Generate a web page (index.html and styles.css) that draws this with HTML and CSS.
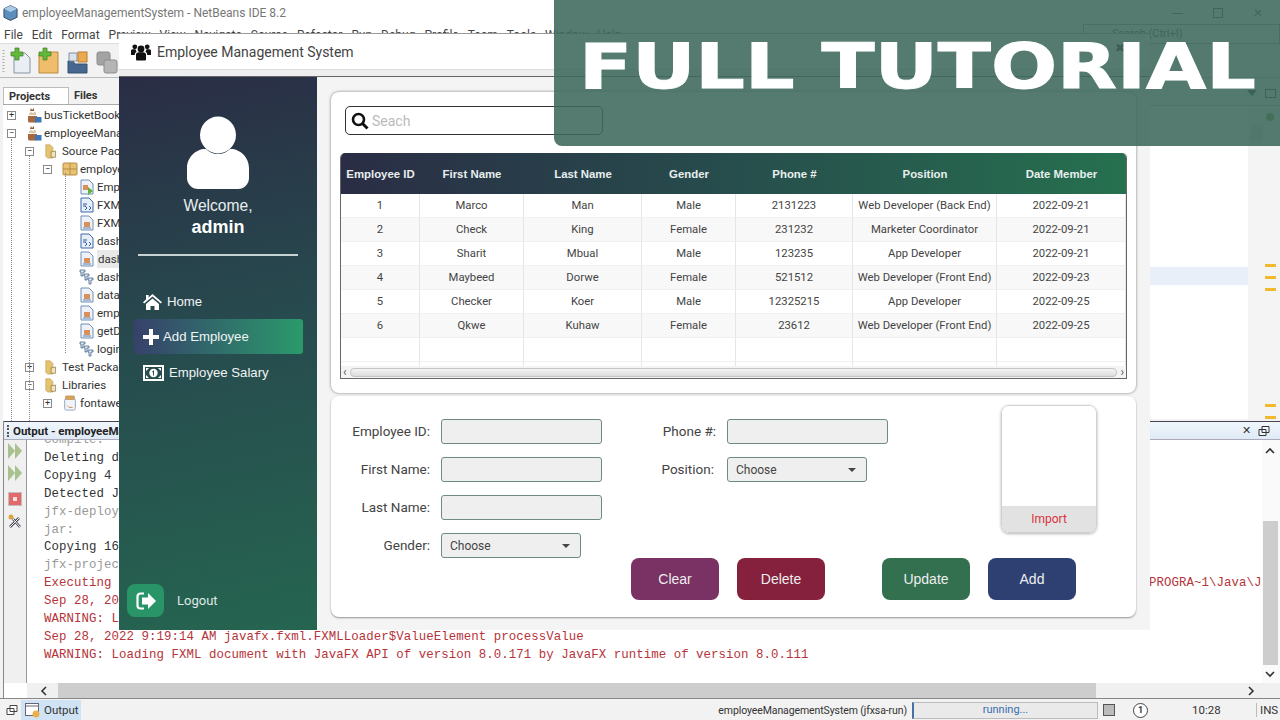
FILE: index.html
```html
<!DOCTYPE html>
<html lang="en">
<head>
    <meta charset="UTF-8">
    <title>Employee Management System</title>
    <link rel="stylesheet" href="styles.css">
</head>
<body>
    <svg class="defs" width="0" height="0">
        <symbol id="i-project" viewBox="0 0 16 16">
            <path d="M2 9h9v5a1.500 1.500 0 0 1-1.500 1.500h-6A1.500 1.500 0 0 1 2 14z" fill="#a8673c"/>
            <path d="M3 6.500l2-1.500 2 1 2-1.500 1 1.500v2H3z" fill="#d9c7a8"/>
            <path d="M5 1l1 2 2-2 0 3H4z" fill="#8a5a3a"/>
            <rect x="9" y="10" width="6.500" height="5.500" fill="#3d77b8"/>
        </symbol>
        <symbol id="i-folder" viewBox="0 0 16 18">
            <path d="M1 2h5l3 3v12H3l-2-2z" fill="#e5c26c" stroke="#b7934a" stroke-width=".6"/>
            <path d="M7 10l5-1v7H7z" fill="#f3e3b6" stroke="#7a6a44" stroke-width=".7"/>
        </symbol>
        <symbol id="i-package" viewBox="0 0 16 16">
            <rect x="1" y="2" width="14" height="12" rx="1" fill="#e8c272" stroke="#b58d43"/>
            <path d="M8 2v12M1 8h14" stroke="#b58d43"/>
        </symbol>
        <symbol id="i-form" viewBox="0 0 14 16">
            <path d="M1 1h8l4 4v10H1z" fill="#eef2f8" stroke="#6f8fb8"/>
            <rect x="4" y="7" width="6" height="5" fill="#d8905c"/>
            <path d="M3 13h8" stroke="#5d80b0"/>
        </symbol>
        <symbol id="i-fxml" viewBox="0 0 14 16">
            <path d="M1 1h8l4 4v10H1z" fill="#e8eef8" stroke="#3c69a8"/>
            <path d="M3 7h4M3 9h3M5 13l2-2-2-2M9 13l2-2-2-2" stroke="#2f5f9f" fill="none"/>
        </symbol>
        <symbol id="i-run" viewBox="0 0 14 16">
            <path d="M1 1h8l4 4v10H1z" fill="#eef2f8" stroke="#6f8fb8"/>
            <rect x="3" y="6" width="5" height="5" fill="#d8905c"/>
            <path d="M8 8l5 4-5 4z" fill="#5fb23a"/>
        </symbol>
        <symbol id="i-css" viewBox="0 0 16 16">
            <path d="M1 1h5v2H4v4H2V3H1zM5 5h5v2H8v4H6V7H5zM9 9h5v2h-2v4h-2v-4H9z" fill="#dfe8f2" stroke="#46688e" stroke-width=".8"/>
        </symbol>
        <symbol id="i-jar" viewBox="0 0 14 18">
            <rect x="1" y="4" width="12" height="13" rx="2" fill="#f1f4f8" stroke="#8aa0b8"/>
            <rect x="2" y="1" width="10" height="4" rx="1" fill="#d9a45a" stroke="#a87b3c" stroke-width=".6"/>
            <path d="M4 12l2 2h4" stroke="#c98a3c" fill="none"/>
        </symbol>
    </svg>

    <!-- NetBeans behind the app -->
    <div class="ide">
        <div class="ide-title">
            <svg class="ide-logo" width="15" height="18" viewBox="0 0 16 18">
                <path d="M8 1l7 3.500v9L8 17l-7-3.500v-9z" fill="#5c8dbd" stroke="#33485e"/>
                <path d="M8 1l7 3.500L8 8 1 4.500z" fill="#a9cbe6"/>
            </svg>
            <span>employeeManagementSystem - NetBeans IDE 8.2</span>
            <div class="win-btns">
                <span class="win-min"></span>
                <span class="win-max"></span>
                <span class="win-close">&#x2715;</span>
            </div>
        </div>
        <div class="ide-menu">
            <span>File</span><span>Edit</span><span>Format</span><span>Preview</span><span>View</span><span>Navigate</span><span>Source</span><span>Refactor</span><span>Run</span><span>Debug</span><span>Profile</span><span>Team</span><span>Tools</span><span>Window</span><span>Help</span>
            <div class="ide-search">Search (Ctrl+I)</div>
        </div>
        <div class="ide-tools">
            <svg width="120" height="34" viewBox="0 0 120 34">
                <path d="M3.500 6v22" stroke="#aaa" stroke-dasharray="1 2" stroke-width="2"/>
                <path d="M14 9h11l5 5v15H14z" fill="#e9eef4" stroke="#8794a2"/>
                <path d="M15 4h4v4h4v4h-4v4h-4v-4h-4V8h4z" fill="#62b83a" stroke="#3c7f1f" stroke-width=".7"/>
                <path d="M39 10h6l2-2h11v21H39z" fill="#f0bd6c" stroke="#b98a3e"/>
                <path d="M43 4h4v4h4v4h-4v4h-4v-4h-4V8h4z" fill="#62b83a" stroke="#3c7f1f" stroke-width=".7"/>
                <path d="M68 17h5l2 3h12v9H68z" fill="#46678f" stroke="#34506f"/>
                <path d="M69 9h8v8h-8z" fill="#dbe4ec" stroke="#7d8fa2"/>
                <rect x="78" y="8" width="9" height="10" fill="#eda94f" stroke="#b77f33"/>
                <rect x="97" y="8" width="13" height="13" rx="2" fill="#a3a3a3" stroke="#8c8c8c"/>
                <rect x="104" y="16" width="13" height="13" rx="2" fill="#b5b5b5" stroke="#8c8c8c"/>
            </svg>
        </div>
        <div class="ide-body">
            <div class="ide-left">
                <div class="panel-tabs">
                    <div class="panel-tab active">Projects <span class="tab-x">&#x2715;</span></div>
                    <div class="panel-tab">Files</div>
                </div>
                <div class="tree">
                    <i class="tree-line l0"></i><i class="tree-line l1"></i><i class="tree-line l2"></i>
                    <div class="tree-row d0"><b class="exp">+</b><svg><use href="#i-project"/></svg>busTicketBooking</div>
                    <div class="tree-row d0"><b class="exp">&minus;</b><svg><use href="#i-project"/></svg>employeeManagementSystem</div>
                    <div class="tree-row d1"><b class="exp">&minus;</b><svg><use href="#i-folder"/></svg>Source Packages</div>
                    <div class="tree-row d2"><b class="exp">&minus;</b><svg><use href="#i-package"/></svg>employeemanagementsystem</div>
                    <div class="tree-row d3"><svg><use href="#i-run"/></svg>EmployeeManagementSystem.java</div>
                    <div class="tree-row d3"><svg><use href="#i-fxml"/></svg>FXMLDocument.fxml</div>
                    <div class="tree-row d3"><svg><use href="#i-form"/></svg>FXMLDocumentController.java</div>
                    <div class="tree-row d3"><svg><use href="#i-fxml"/></svg>dashboard.fxml</div>
                    <div class="tree-row d3"><svg><use href="#i-form"/></svg><span class="tree-sel">dashboardController.java</span></div>
                    <div class="tree-row d3"><svg><use href="#i-css"/></svg>dashboardDesign.css</div>
                    <div class="tree-row d3"><svg><use href="#i-form"/></svg>database.java</div>
                    <div class="tree-row d3"><svg><use href="#i-form"/></svg>employeeData.java</div>
                    <div class="tree-row d3"><svg><use href="#i-form"/></svg>getData.java</div>
                    <div class="tree-row d3"><svg><use href="#i-css"/></svg>loginDesign.css</div>
                    <div class="tree-row d1"><b class="exp">+</b><svg><use href="#i-folder"/></svg>Test Packages</div>
                    <div class="tree-row d1"><b class="exp">&minus;</b><svg><use href="#i-folder"/></svg>Libraries</div>
                    <div class="tree-row d2"><b class="exp">+</b><svg><use href="#i-jar"/></svg>fontawesome.jar</div>
                </div>
            </div>
            <div class="ide-editor">
                <div class="editor-head"><i class="tri"></i><i class="box"></i></div>
                <div class="editor-main">
                    <div class="editor-page"><div class="editor-hl"></div></div>
                    <div class="editor-marks">
                        <i class="mark-dot"></i><i class="mark-thumb"></i>
                        <i class="mark m1"></i><i class="mark m2"></i><i class="mark m3"></i><i class="mark m4"></i><i class="mark m5"></i>
                    </div>
                </div>
            </div>
        </div>
        <div class="output">
            <div class="output-head">
                <span class="grip"></span><span class="output-title">Output - employeeManagementSystem (jfxsa-run)</span>
                <span class="output-x">&#x2715;</span>
                <svg width="12" height="12" viewBox="0 0 12 12"><path d="M4 1.500h7v6H4zM1 4.500h7v6H1z" fill="#eef5fc" stroke="#333"/></svg>
            </div>
            <div class="output-body">
                <div class="gutter">
                    <svg width="18" height="18" viewBox="0 0 18 18"><path d="M2 1l7 8-7 8zM9 1l7 8-7 8z" fill="#a9c08f"/></svg>
                    <svg width="18" height="18" viewBox="0 0 18 18"><path d="M2 1l7 8-7 8zM9 1l7 8-7 8z" fill="#a9c08f"/></svg>
                    <svg class="g-stop" width="14" height="14" viewBox="0 0 14 14"><rect x=".5" y=".5" width="13" height="13" fill="#e46a6a" stroke="#c0c0c0"/><rect x="5" y="5" width="4" height="4" fill="#fbe0e0"/></svg>
                    <svg class="g-tool" width="16" height="16" viewBox="0 0 16 16"><circle cx="4" cy="3" r="2.500" fill="#d9a53c"/><path d="M3 13l9-9M6 5l7 8" stroke="#445" stroke-width="2.500"/><path d="M3 13l9-9M6 5l7 8" stroke="#fff" stroke-width="1"/></svg>
                </div>
                <div class="output-text">
                    <div class="line-cut">
                        <div class="ln dim">Compile:</div>
                        <div class="ln">Deleting directory</div>
                        <div class="ln">Copying 4 files</div>
                        <div class="ln">Detected JavaFX</div>
                        <div class="ln dim">jfx-deployment:</div>
                        <div class="ln dim">jar:</div>
                        <div class="ln">Copying 16 files</div>
                        <div class="ln dim">jfx-project-run:</div>
                        <div class="ln red">Executing<span class="tail">PROGRA~1\Java\JDK</span></div>
                        <div class="ln red">Sep 28, 2022</div>
                        <div class="ln red">WARNING: Loading</div>
                        <div class="ln red">Sep 28, 2022 9:19:14 AM javafx.fxml.FXMLLoader$ValueElement processValue</div>
                        <div class="ln red">WARNING: Loading FXML document with JavaFX API of version 8.0.171 by JavaFX runtime of version 8.0.111</div>
                    </div>
                    <div class="out-vbar">
                        <svg class="chev-up" width="10" height="7" viewBox="0 0 10 7"><path d="M1 6l4-4 4 4" fill="none" stroke="#333" stroke-width="1.600"/></svg>
                        <i class="out-vthumb"></i>
                        <svg class="chev-down" width="10" height="7" viewBox="0 0 10 7"><path d="M1 1l4 4 4-4" fill="none" stroke="#333" stroke-width="1.600"/></svg>
                    </div>
                </div>
            </div>
            <div class="out-hbar">
                <svg class="chev-left" width="7" height="10" viewBox="0 0 7 10"><path d="M6 1L2 5l4 4" fill="none" stroke="#333" stroke-width="1.600"/></svg>
                <i class="out-hthumb"></i>
                <svg class="chev-right" width="7" height="10" viewBox="0 0 7 10"><path d="M1 1l4 4-4 4" fill="none" stroke="#333" stroke-width="1.600"/></svg>
            </div>
        </div>
        <div class="status">
            <svg width="12" height="12" viewBox="0 0 12 12"><path d="M4 1.500h7v6H4zM1 4.500h7v6H1z" fill="#fff" stroke="#444"/></svg>
            <div class="status-tab">
                <svg width="16" height="15" viewBox="0 0 16 15"><rect x=".5" y=".5" width="13" height="12" fill="#fff" stroke="#667"/><path d="M1 3h12" stroke="#667"/><circle cx="11" cy="11" r="3.500" fill="#e8b04c"/></svg>
                Output
            </div>
            <span class="status-proj">employeeManagementSystem (jfxsa-run)</span>
            <div class="status-run">running...</div>
            <span class="status-ico"></span>
            <span class="status-note">1</span>
            <span class="status-time">10:28</span>
            <span class="status-ins">INS</span>
        </div>
    </div>

    <!-- the app window -->
    <div class="app">
        <div class="app-title">
            <svg width="20" height="18" viewBox="0 0 20 18">
                <circle cx="10" cy="6" r="3.400" fill="#111"/><circle cx="3.800" cy="3.800" r="2.400" fill="#111"/><circle cx="16.200" cy="3.800" r="2.400" fill="#111"/>
                <path d="M5 11a3 3 0 0 1 3-1.800h4a3 3 0 0 1 3 1.800v5.500a1 1 0 0 1-1 1H6a1 1 0 0 1-1-1z" fill="#111"/>
                <path d="M0 7.500a2 2 0 0 1 2-1.300h2.600a4 4 0 0 0 1 2.400A4 4 0 0 0 3.700 12H0zM20 7.500a2 2 0 0 0-2-1.300h-2.600a4 4 0 0 1-1 2.400 4 4 0 0 1 1.900 3.400H20z" fill="#111"/>
            </svg>
            <span>Employee Management System</span>
        </div>
        <div class="app-strip"></div>
        <div class="app-body">
            <div class="sidebar">
                <svg class="avatar" width="64" height="74" viewBox="0 0 64 74">
                    <ellipse cx="32" cy="19" rx="18" ry="18.500" fill="#fff"/>
                    <path d="M1 62V52C1 40 12 32 20 33c3 3 7 5 12 5s9-2 12-5c8-1 19 7 19 19v10a11 11 0 0 1-11 11H12A11 11 0 0 1 1 62z" fill="#fff"/>
                </svg>
                <div class="welcome">Welcome,</div>
                <div class="username">admin</div>
                <div class="side-line"></div>
                <div class="nav">
                    <div class="nav-item nav-home">
                        <svg width="19" height="16" viewBox="0 0 19 16"><path d="M9.500 0L19 8.200l-1.200 1.300-8.300-7-8.300 7L0 8.200l3-2.600V1h2.600v2.400z" fill="#fff"/><path d="M3 10l6.500-5.500L16 10v6h-4.500v-4h-4v4H3z" fill="#fff"/></svg>
                        Home
                    </div>
                    <div class="nav-item nav-add active">
                        <svg width="16" height="16" viewBox="0 0 16 16"><path d="M6 0h4v6h6v4h-6v6H6v-6H0V6h6z" fill="#fff"/></svg>
                        Add Employee
                    </div>
                    <div class="nav-item nav-salary">
                        <svg width="21" height="16" viewBox="0 0 21 16"><path d="M0 0h21v16H0zM2 2v12h17V2z" fill="#fff"/><circle cx="10.500" cy="8" r="4.200" fill="#fff"/><path d="M3 3h3L3 6zM18 3v3l-3-3zM3 13v-3l3 3zM18 13h-3l3-3z" fill="#fff"/><path d="M10 5.500h1v5h-1zM9.200 6.300h1v1h-1z" fill="#2a5550"/></svg>
                        Employee Salary
                    </div>
                </div>
                <div class="logout">
                    <button class="logout-btn">
                        <svg width="20" height="18" viewBox="0 0 20 18"><path d="M8 1.500H4.500A3 3 0 0 0 1.500 4.500v9a3 3 0 0 0 3 3H8" fill="none" stroke="#fff" stroke-width="2.200"/><path d="M12 1l8 8-8 8v-4.500H6v-7h6z" fill="#fff"/></svg>
                    </button>
                    <span>Logout</span>
                </div>
            </div>
            <div class="content">
                <div class="card card-top">
                    <div class="search">
                        <svg width="18" height="18" viewBox="0 0 18 18"><circle cx="7.500" cy="7.500" r="5.500" fill="none" stroke="#111" stroke-width="2.600"/><path d="M11.500 11.500l5 5" stroke="#111" stroke-width="3"/></svg>
                        <span>Seach</span>
                    </div>
                    <div class="table-frame">
                        <div class="table-clip">
                            <table class="emp-table">
                                <colgroup>
                                    <col class="c1"><col class="c2"><col class="c3"><col class="c4"><col class="c5"><col class="c6"><col class="c7">
                                </colgroup>
                                <thead>
                                    <tr>
                                        <th>Employee ID</th><th>First Name</th><th>Last Name</th><th>Gender</th><th>Phone #</th><th>Position</th><th>Date Member</th>
                                    </tr>
                                </thead>
                                <tbody>
                                    <tr><td>1</td><td>Marco</td><td>Man</td><td>Male</td><td>2131223</td><td>Web Developer (Back End)</td><td>2022-09-21</td></tr>
                                    <tr><td>2</td><td>Check</td><td>King</td><td>Female</td><td>231232</td><td>Marketer Coordinator</td><td>2022-09-21</td></tr>
                                    <tr><td>3</td><td>Sharit</td><td>Mbual</td><td>Male</td><td>123235</td><td>App Developer</td><td>2022-09-21</td></tr>
                                    <tr><td>4</td><td>Maybeed</td><td>Dorwe</td><td>Female</td><td>521512</td><td>Web Developer (Front End)</td><td>2022-09-23</td></tr>
                                    <tr><td>5</td><td>Checker</td><td>Koer</td><td>Male</td><td>12325215</td><td>App Developer</td><td>2022-09-25</td></tr>
                                    <tr><td>6</td><td>Qkwe</td><td>Kuhaw</td><td>Female</td><td>23612</td><td>Web Developer (Front End)</td><td>2022-09-25</td></tr>
                                    <tr class="empty"><td></td><td></td><td></td><td></td><td></td><td></td><td></td></tr>
                                    <tr class="empty"><td></td><td></td><td></td><td></td><td></td><td></td><td></td></tr>
                                </tbody>
                            </table>
                        </div>
                        <div class="table-scroll">
                            <span>&#x2039;</span><i class="table-thumb"></i><span>&#x203A;</span>
                        </div>
                    </div>
                </div>
                <div class="card card-form">
                    <div class="form-left">
                        <div class="field"><label>Employee ID:</label><div class="input"></div></div>
                        <div class="field"><label>First Name:</label><div class="input"></div></div>
                        <div class="field"><label>Last Name:</label><div class="input"></div></div>
                        <div class="field"><label>Gender:</label><div class="input select">Choose<i class="caret"></i></div></div>
                    </div>
                    <div class="form-right">
                        <div class="form-top">
                            <div class="form-mid">
                                <div class="field"><label>Phone #:</label><div class="input"></div></div>
                                <div class="field field-pos"><label>Position:</label><div class="input select">Choose<i class="caret"></i></div></div>
                            </div>
                            <div class="photo">
                                <div class="photo-img"></div>
                                <div class="photo-btn">Import</div>
                            </div>
                        </div>
                        <div class="actions">
                            <button class="btn btn-clear">Clear</button>
                            <button class="btn btn-delete">Delete</button>
                            <button class="btn btn-update">Update</button>
                            <button class="btn btn-add">Add</button>
                        </div>
                    </div>
                </div>
            </div>
        </div>
        <span class="app-x">&#x2716;</span>
    </div>

    <!-- video banner -->
    <div class="banner">
        <div class="banner-text">FULL TUTORIAL</div>
    </div>
</body>
</html>
```

FILE: styles.css
```css
* {
    margin: 0;
    padding: 0;
    box-sizing: border-box;
}

body {
    width: 1280px;
    height: 720px;
    position: relative;
    overflow: hidden;
    background: #fff;
    font-family: Roboto, sans-serif;
    color: #333;
}

.defs {
    position: absolute;
}

/* NetBeans */
.ide {
    width: 1280px;
    height: 720px;
    display: flex;
    flex-direction: column;
    background: #f2f2f2;
}

.ide-title {
    height: 26px;
    flex: none;
    display: flex;
    align-items: center;
    gap: 4px;
    padding-left: 3px;
    background: #fff;
    font-size: 12px;
    color: #777;
}

.win-btns {
    margin-left: auto;
    display: flex;
    align-items: center;
    gap: 30px;
    padding-right: 17px;
    color: #555;
}

.win-min {
    width: 11px;
    height: 1px;
    background: #555;
}

.win-max {
    width: 10px;
    height: 10px;
    border: 1px solid #555;
}

.win-close {
    font-size: 12px;
}

.ide-menu {
    height: 18px;
    flex: none;
    display: flex;
    align-items: center;
    gap: 9px;
    padding-left: 4px;
    background: #fff;
    font-size: 12px;
    color: #444;
    border-bottom: 1px solid #ddd;
    position: relative;
}

.ide-search {
    position: absolute;
    left: 1083px;
    top: -2px;
    width: 197px;
    height: 20px;
    padding-left: 28px;
    border: 1px solid #999;
    font-size: 11px;
    line-height: 18px;
}

.ide-tools {
    height: 34px;
    flex: none;
    background: #f2f2f2;
    border-bottom: 1px solid #bbb;
}

.ide-body {
    flex: 1;
    min-height: 0;
    display: flex;
}

.ide-left {
    width: 400px;
    flex: none;
    padding: 9px 0 0 3px;
    background: #f2f2f2;
}

.panel-tabs {
    height: 18px;
    display: flex;
    border-bottom: 1px solid #aaa;
}

.panel-tab {
    padding: 0 6px 0 5px;
    font-size: 11px;
    font-weight: 700;
    line-height: 18px;
    color: #333;
}

.panel-tab.active {
    background: #fff;
    width: 66px;
    border: 1px solid #bbb;
    border-bottom: none;
}

.tab-x {
    margin-left: 6px;
    font-weight: 400;
    font-size: 10px;
}

.tree {
    position: relative;
    height: 330px;
    padding-top: 1px;
    background: #fff;
    overflow: hidden;
}

.tree-row {
    height: 18px;
    display: flex;
    align-items: center;
    font-size: 11.5px;
    color: #333;
    white-space: nowrap;
}

.tree-row svg {
    width: 16px;
    height: 16px;
    flex: none;
    margin-right: 2px;
}

.tree-row.d0 { padding-left: 4px; }
.tree-row.d1 { padding-left: 22px; }
.tree-row.d2 { padding-left: 40px; }
.tree-row.d3 { padding-left: 76px; }

.exp {
    width: 9px;
    height: 9px;
    margin-right: 10px;
    flex: none;
    border: 1px solid #8a8a8a;
    background: #fff;
    font-size: 9px;
    font-weight: 400;
    line-height: 7px;
    text-align: center;
    color: #333;
}

.tree-sel {
    padding: 2px 4px 2px 1px;
    background: #e8e8e8;
}

.tree-line {
    position: absolute;
    width: 0;
    border-left: 1px dotted #888;
}

.tree-line.l0 { left: 8px; top: 34px; height: 300px; }
.tree-line.l1 { left: 26px; top: 50px; height: 300px; }
.tree-line.l2 { left: 62px; top: 68px; height: 180px; }

.ide-editor {
    flex: 1;
    display: flex;
    flex-direction: column;
}

.editor-head {
    height: 28px;
    display: flex;
    justify-content: flex-end;
    align-items: center;
    gap: 8px;
    padding: 3px 4px 0 0;
    background: #f2f2f2;
    border-bottom: 1px solid #bbb;
}

.tri {
    width: 0;
    height: 0;
    border: 5px solid transparent;
    border-top: 6px solid #333;
    border-bottom: none;
}

.box {
    width: 11px;
    height: 9px;
    border: 1px solid #333;
}

.editor-main {
    height: 313px;
    display: flex;
    background: #fff;
}

.editor-page {
    flex: 1;
    position: relative;
}

.editor-hl {
    position: absolute;
    left: 0;
    right: 0;
    top: 161px;
    height: 18px;
    background: #e9eff8;
}

.editor-marks {
    width: 32px;
    position: relative;
    background: #f4f4f4;
}

.mark-dot {
    position: absolute;
    left: 18px;
    top: 7px;
    width: 8px;
    height: 8px;
    border-radius: 50%;
    background: #6fa53c;
}

.mark-thumb {
    position: absolute;
    left: 2px;
    top: 19px;
    width: 13px;
    height: 18px;
    background: #d8d8d8;
}

.mark {
    position: absolute;
    left: 17px;
    width: 11px;
    height: 3px;
    background: #f2b92c;
}

.mark.m1 { top: 158px; }
.mark.m2 { top: 170px; }
.mark.m3 { top: 182px; }
.mark.m4 { top: 298px; }
.mark.m5 { top: 310px; }

/* output panel */
.output {
    position: absolute;
    left: 3px;
    top: 421px;
    width: 1277px;
    height: 277px;
    display: flex;
    flex-direction: column;
    background: #fff;
    border-left: 1px solid #888;
}

.output-head {
    height: 19px;
    flex: none;
    display: flex;
    align-items: center;
    padding: 0 10px 0 3px;
    background: linear-gradient(#f0f6fc, #dfeaf6);
    border-top: 1px solid #445;
    border-bottom: 1px solid #aab;
}

.grip {
    width: 2px;
    height: 12px;
    margin-right: 4px;
    border-left: 2px dotted #555;
}

.output-title {
    font-size: 11.5px;
    font-weight: 700;
    color: #222;
}

.output-x {
    margin-left: auto;
    margin-right: 7px;
    font-size: 11px;
    color: #333;
}

.output-body {
    flex: 1;
    min-height: 0;
    display: flex;
}

.gutter {
    width: 23px;
    flex: none;
    display: flex;
    flex-direction: column;
    align-items: center;
    gap: 4px;
    padding-top: 2px;
    background: #f0f0f0;
    border-right: 1px solid #999;
}

.g-stop { margin-top: 6px; }
.g-tool { margin-top: 4px; }

.output-text {
    flex: 1;
    min-width: 0;
    display: flex;
    background: #fff;
    overflow: hidden;
}

.line-cut {
    flex: 1;
    min-width: 0;
    height: 100%;
    margin-top: -8px;
    padding-left: 17px;
    font-family: "Liberation Mono", monospace;
    font-size: 12.4px;
    letter-spacing: 0.06px;
    line-height: 17.9px;
    white-space: nowrap;
    overflow: hidden;
}

.ln {
    color: #333;
    position: relative;
}

.ln.dim {
    color: #999;
}

.ln.red {
    color: #b5343a;
}

.tail {
    position: absolute;
    left: 1105px;
}

.out-vbar {
    width: 18px;
    flex: none;
    position: relative;
    background: #fafafa;
}

.out-vthumb {
    position: absolute;
    left: 1px;
    top: 81px;
    width: 15px;
    height: 144px;
    background: #cdcdcd;
}

.chev-up {
    position: absolute;
    left: 3px;
    top: 7px;
}

.chev-down {
    position: absolute;
    left: 3px;
    bottom: 5px;
}

.out-hbar {
    height: 15px;
    flex: none;
    display: flex;
    align-items: center;
    margin-left: 23px;
    background: #f0f0f0;
}

.chev-left {
    margin: 0 11px 0 13px;
}

.out-hthumb {
    width: 1038px;
    height: 15px;
    background: #cdcdcd;
}

.chev-right {
    margin-left: auto;
    margin-right: 25px;
}

/* status bar */
.status {
    position: absolute;
    left: 0;
    top: 698px;
    width: 1280px;
    height: 22px;
    display: flex;
    align-items: center;
    padding: 1px 0 0 6px;
    background: #f2f2f2;
    border-top: 1px solid #888;
    font-size: 11.5px;
    color: #333;
}

.status-tab {
    height: 20px;
    width: 60px;
    margin-left: 3px;
    display: flex;
    align-items: center;
    gap: 3px;
    padding-left: 4px;
    background: #cfe3f4;
}

.status-proj {
    margin-left: auto;
    font-size: 10.5px;
    letter-spacing: -0.1px;
    white-space: nowrap;
}

.status-run {
    width: 186px;
    height: 17px;
    margin-left: 5px;
    border: 1px solid #bbb;
    border-left: 2px solid #4472a8;
    background: #eaeaea;
    text-align: center;
    font-size: 11px;
    line-height: 14px;
    color: #3a6db0;
}

.status-ico {
    width: 12px;
    height: 12px;
    margin-left: 5px;
    border: 1px solid #555;
    background: #bbb;
}

.status-note {
    width: 15px;
    height: 15px;
    margin-left: 18px;
    border: 1px solid #444;
    border-radius: 50%;
    font-weight: 700;
    font-size: 9px;
    line-height: 13px;
    text-align: center;
    background: #fff;
}

.status-time {
    margin-left: 44px;
    width: 50px;
}

.status-ins {
    width: 38px;
    margin-left: 14px;
    padding-left: 3px;
    border-left: 1px solid #bbb;
    margin-right: -14px;
}

/* app window */
.app {
    position: absolute;
    left: 119px;
    top: 33px;
    width: 1031px;
    height: 597px;
    display: flex;
    flex-direction: column;
    background: #f4f4f4;
    border-top: 1px solid #999;
}

.app-title {
    height: 35px;
    flex: none;
    display: flex;
    align-items: center;
    gap: 6px;
    padding-left: 12px;
    background: #fff;
    font-size: 14px;
    color: #444;
}

.app-strip {
    height: 8px;
    flex: none;
    background: #eee;
    border-top: 1px solid #ddd;
    border-bottom: 1px solid #666;
}

.app-x {
    position: absolute;
    right: 25px;
    top: 7px;
    font-size: 12px;
    color: #222;
}

.app-body {
    flex: 1;
    min-height: 0;
    display: flex;
}

/* sidebar */
.sidebar {
    width: 198px;
    flex: none;
    display: flex;
    flex-direction: column;
    align-items: center;
    padding-top: 39px;
    background: linear-gradient(168deg, #2a2d45 0%, #274a4e 45%, #256550 100%);
    font-family: "Liberation Sans", Arial, sans-serif;
    color: #fff;
}

.welcome {
    margin-top: 6px;
    font-size: 15.6px;
    line-height: 20px;
    color: #e8eeee;
}

.username {
    font-size: 18px;
    line-height: 22px;
    font-weight: 700;
}

.side-line {
    width: 160px;
    height: 2px;
    margin-top: 16px;
    background: #c6d3d2;
}

.nav {
    width: 100%;
    margin-top: 28px;
    padding: 0 14px 0 15px;
    display: flex;
    flex-direction: column;
}

.nav-item {
    height: 35px;
    display: flex;
    align-items: center;
    padding-left: 9px;
    font-size: 13.2px;
    color: #f0f4f4;
}

.nav-home { gap: 5px; }
.nav-add { gap: 4px; }
.nav-salary { gap: 5px; margin-top: 1px; }

.nav-item.active {
    background: linear-gradient(90deg, #37416b, #2a9a6b);
    border-radius: 3px;
}

.logout {
    width: 100%;
    margin-top: auto;
    margin-bottom: 13px;
    padding-left: 8px;
    display: flex;
    align-items: center;
    gap: 13px;
    font-family: Roboto, sans-serif;
    font-size: 13px;
    color: #dfe9e6;
}

.logout-btn {
    width: 37px;
    height: 33px;
    display: flex;
    align-items: center;
    justify-content: center;
    border: none;
    border-radius: 8px;
    background: #2a9469;
}

/* main cards */
.content {
    flex: 1;
    min-width: 0;
    display: flex;
    flex-direction: column;
    gap: 3px;
    padding: 15px 14px 13px;
}

.card {
    background: #fff;
    border-radius: 8px;
}

.card-top {
    height: 301px;
    padding: 14px 9px;
    box-shadow: 0 0 3px rgba(0, 0, 0, 0.5);
}

.search {
    width: 258px;
    height: 29px;
    margin: 0 0 18px 5px;
    display: flex;
    align-items: center;
    gap: 3px;
    padding-left: 5px;
    border: 1px solid #333;
    border-radius: 5px;
    font-size: 14px;
    color: #bbb;
}

.table-frame {
    height: 226px;
    display: flex;
    flex-direction: column;
    border: 1px solid #666;
    border-top: none;
    border-radius: 5px 5px 0 0;
    overflow: hidden;
}

.table-clip {
    flex: 1;
    min-height: 0;
    overflow: hidden;
}

.emp-table {
    width: 785px;
    table-layout: fixed;
    border-collapse: separate;
    border-spacing: 0;
}

.c1 { width: 79px; }
.c2 { width: 104px; }
.c3 { width: 118px; }
.c4 { width: 94px; }
.c5 { width: 117px; }
.c6 { width: 144px; }

.emp-table thead tr {
    background: linear-gradient(90deg, #2a2d45 0%, #274a4c 45%, #26704f 100%);
}

.emp-table th {
    height: 41px;
    padding-top: 1px;
    font-family: "Liberation Sans", Arial, sans-serif;
    font-size: 11.4px;
    font-weight: 700;
    color: #e8efee;
}

.emp-table td {
    height: 24px;
    font-size: 11.3px;
    text-align: center;
    color: #444;
    border-right: 1px solid #e6e6e6;
    border-bottom: 1px solid #f0f0f0;
    white-space: nowrap;
}

.emp-table tbody tr:nth-child(even) {
    background: #f8f8f8;
}

.emp-table tbody tr.empty {
    background: #fff;
}

.table-scroll {
    height: 12px;
    flex: none;
    display: flex;
    align-items: center;
    gap: 3px;
    padding: 0 2px;
    background: #f4f4f4;
    font-size: 12px;
    line-height: 12px;
    color: #555;
}

.table-thumb {
    flex: 1;
    height: 9px;
    border: 1px solid #c4c4c4;
    border-radius: 4px;
    background: linear-gradient(#f4f4f4, #dcdcdc);
}

/* form */
.card-form {
    height: 221px;
    display: flex;
    box-shadow: 0 1px 2px rgba(0, 0, 0, 0.4);
}

.form-left {
    width: 300px;
    flex: none;
    padding-top: 23px;
    display: flex;
    flex-direction: column;
    gap: 13px;
}

.field {
    height: 25px;
    display: flex;
    align-items: center;
    gap: 11px;
}

.field label {
    width: 99px;
    padding-bottom: 2px;
    text-align: right;
    font-size: 13.5px;
    color: #444;
}

.input {
    width: 161px;
    height: 25px;
    background: #efefef;
    border: 1px solid #6f8a80;
    border-radius: 3px;
}

.input.select {
    width: 140px;
    display: flex;
    align-items: center;
    justify-content: space-between;
    padding: 0 10px 0 8px;
    font-size: 12px;
    color: #444;
}

.caret {
    width: 0;
    height: 0;
    border: 4px solid transparent;
    border-top: 4px solid #444;
    border-bottom: none;
}

.form-right {
    flex: 1;
    padding-top: 9px;
}

.form-top {
    display: flex;
}

.form-mid {
    width: 370px;
    flex: none;
    padding-top: 14px;
    display: flex;
    flex-direction: column;
    gap: 13px;
}

.form-mid .field label {
    width: 85px;
}

.form-mid .field-pos label {
    padding-right: 2px;
}

.photo {
    width: 96px;
    height: 128px;
    display: flex;
    flex-direction: column;
    border-radius: 8px;
    overflow: hidden;
    border: 1px solid #d0d0d0;
    box-shadow: 0 1px 3px rgba(0, 0, 0, 0.3);
}

.photo-img {
    flex: 1;
    background: #fff;
}

.photo-btn {
    height: 26px;
    background: #e2e2e2;
    text-align: center;
    font-size: 12px;
    line-height: 26px;
    color: #d8343c;
}

.actions {
    margin-top: 25px;
    display: flex;
    gap: 18px;
}

.btn {
    width: 88px;
    height: 42px;
    border: none;
    border-radius: 8px;
    font-family: "Liberation Sans", Arial, sans-serif;
    font-size: 14px;
    color: #eee;
}

.btn-clear { background: #7a3163; }
.btn-delete { background: #85213c; }
.btn-update { background: #327050; margin-left: 39px; }
.btn-add { background: #2d4071; }

/* banner over the video */
.banner {
    position: absolute;
    left: 554px;
    top: 0;
    width: 726px;
    height: 146px;
    padding: 36px 0 0 25px;
    background: rgba(62, 104, 92, 0.88);
    border-bottom-left-radius: 8px;
    overflow: hidden;
}

.banner-text {
    font-family: "DejaVu Sans", sans-serif;
    font-size: 62px;
    font-weight: 700;
    line-height: 62px;
    color: #fff;
    -webkit-text-stroke: 1px #fff;
    white-space: nowrap;
    transform-origin: left top;
    transform: scaleX(1.255);
}
```
